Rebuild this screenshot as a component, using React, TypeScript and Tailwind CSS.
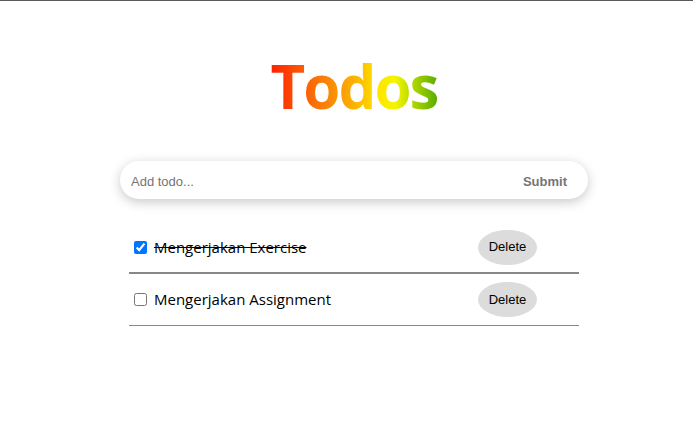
import { useState } from "react";

type Todo = { id: number; title: string; completed: boolean };

export default function App() {
  const [todos, setTodos] = useState<Todo[]>([
    { id: 1, title: "Mengerjakan Exercise", completed: true },
    { id: 2, title: "Mengerjakan Assignment", completed: false },
  ]);
  const [text, setText] = useState("");

  const toggle = (id: number) =>
    setTodos(todos.map((t) => (t.id === id ? { ...t, completed: !t.completed } : t)));
  const remove = (id: number) => setTodos(todos.filter((t) => t.id !== id));

  return (
    <div className="min-h-[432px] w-full border-t border-[#5a5a5a] bg-white font-['Open_Sans',sans-serif]">
      <div className="ml-[120px] w-[468px] pt-[45px]">
        <div className="text-center">
          <h1 className="inline-block bg-[linear-gradient(90deg,#ff2200_0%,#f97a08_30%,#fbb800_52%,#ffe600_65%,#f2f500_75%,#5aae00_100%)] bg-clip-text text-[60px] font-bold leading-[80px] tracking-[-2px] text-transparent">
            Todos
          </h1>
        </div>

        <form
          className="mt-[35px] flex h-[38px] items-center rounded-full bg-white pl-[11px] pr-[21px] pt-[4px] shadow-[0_3px_12px_rgba(0,0,0,0.22)]"
          onSubmit={(e) => {
            e.preventDefault();
            if (!text.trim()) return;
            setTodos([...todos, { id: Date.now(), title: text, completed: false }]);
            setText("");
          }}
        >
          <input
            value={text}
            onChange={(e) => setText(e.target.value)}
            placeholder="Add todo..."
            className="flex-1 bg-transparent font-['Liberation_Sans',sans-serif] text-[13px] text-[#333] outline-none placeholder:text-[#757575]"
          />
          <button className="font-['Liberation_Sans',sans-serif] text-[13px] font-bold text-[#757575]">
            Submit
          </button>
        </form>

        <div className="mx-[9px] mt-[23px]">
          {todos.map((todo, i) => (
            <div
              key={todo.id}
              className={`flex h-[52px] items-center justify-between pl-[5px] pr-[42px] ${
                i === 0 ? "border-b-2 border-[#888]" : "border-b border-[#888]"
              }`}
            >
              <label className="flex items-center gap-[7px] text-[15px] text-black">
                <input
                  type="checkbox"
                  checked={todo.completed}
                  onChange={() => toggle(todo.id)}
                  className="h-[13px] w-[13px] accent-[#0075ff]"
                />
                <span className={todo.completed ? "line-through" : ""}>{todo.title}</span>
              </label>
              <button
                onClick={() => remove(todo.id)}
                className="h-[35px] w-[59px] rounded-[50%] bg-[#dcdcdc] font-['Liberation_Sans',sans-serif] text-[13px] text-black"
              >
                Delete
              </button>
            </div>
          ))}
        </div>
      </div>
    </div>
  );
}
